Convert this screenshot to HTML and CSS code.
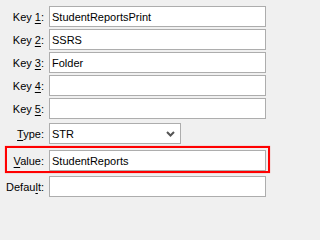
FILE: index.html
```html
<!DOCTYPE html>
<html>
<head>
<meta charset="utf-8">
<link rel="stylesheet" href="styles.css">
</head>
<body>
<div class="form">
  <div class="row r1"><label class="lbl">Key <u>1</u>:</label><div class="box">StudentReportsPrint</div></div>
  <div class="row r2"><label class="lbl">Key <u>2</u>:</label><div class="box">SSRS</div></div>
  <div class="row r2"><label class="lbl">Key <u>3</u>:</label><div class="box">Folder</div></div>
  <div class="row r2"><label class="lbl">Key <u>4</u>:</label><div class="box"></div></div>
  <div class="row r2"><label class="lbl">Key <u>5</u>:</label><div class="box"></div></div>
  <div class="row rtype"><label class="lbl"><u>T</u>ype:</label><div class="box select">STR<svg class="chev" width="9" height="6" viewBox="0 0 9 6"><path d="M1 1 L4.5 4.5 L8 1" fill="none" stroke="#555" stroke-width="2"/></svg></div></div>
  <div class="row rvalue highlight"><label class="lbl"><u>V</u>alue:</label><div class="box">StudentReports</div></div>
  <div class="row rdefault"><label class="lbl">Defau<u>l</u>t:</label><div class="box"></div></div>
</div>
</body>
</html>
```
FILE: styles.css
```css
html, body {
  margin: 0;
  padding: 0;
  background: #f0f0f0;
}
body {
  width: 271px;
  height: 203px;
  overflow: hidden;
  font-family: "Liberation Sans", Arial, sans-serif;
  font-size: 11px;
  color: #000;
}
.form {
  display: flex;
  flex-direction: column;
  padding: 6px 5px 0 0;
}
.row {
  display: flex;
  align-items: center;
  height: 21px;
  gap: 5px;
}
.r2 { margin-top: 2px; }
.rtype { margin-top: 4px; }
.rvalue { margin-top: 6px; }
.rdefault { margin-top: 5px; }
.lbl {
  width: 44px;
  text-align: right;
  flex: none;
  white-space: nowrap;
}
.lbl u {
  text-decoration-thickness: 1px;
  text-underline-offset: 2px;
}
.box {
  flex: 1;
  height: 21px;
  box-sizing: border-box;
  border: 1px solid #adadad;
  background: #fff;
  padding: 0 2px;
  display: flex;
  align-items: center;
  white-space: nowrap;
}
.select {
  flex: none;
  width: 132px;
  position: relative;
}
.chev {
  position: absolute;
  right: 5px;
  top: 7px;
}
.highlight {
  position: relative;
}
.highlight::after {
  content: "";
  position: absolute;
  left: 5px;
  right: -4px;
  top: -4px;
  bottom: -2px;
  border: 2px solid #f00;
  box-shadow: 0 0 1px rgba(255,0,0,0.5);
  pointer-events: none;
}
```
